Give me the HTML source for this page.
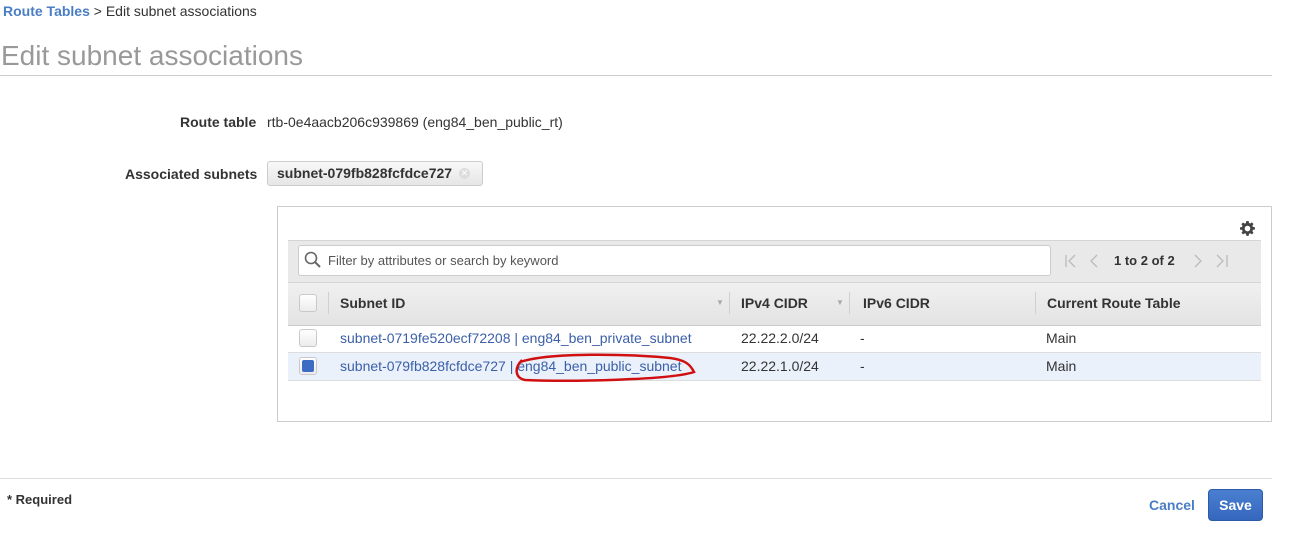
<!DOCTYPE html>
<html><head><style>
body{margin:0;width:1296px;height:544px;background:#fff;font-family:"Liberation Sans",Arial,sans-serif;position:relative;overflow:hidden;color:#333}
.a{position:absolute;white-space:nowrap}
.b{font-weight:bold}
.lnk{color:#3b5fa8}
.cb{position:absolute;width:16px;height:16px;border:1px solid #c9c9c9;border-radius:3px;background:linear-gradient(#fff,#ececec)}
.sep{position:absolute;width:1px;background:#d0d0d0}
</style></head><body>
<div class="a" style="left:3px;top:3px;font-size:14px"><span class="b" style="color:#4a7ec4">Route Tables</span> &gt; Edit subnet associations</div>
<div class="a" style="left:1px;top:40px;font-size:28px;color:#999">Edit subnet associations</div>
<div class="a" style="left:0;top:75px;width:1272px;height:1px;background:#ccc"></div>
<div class="a b" style="left:180px;top:114px;font-size:14px">Route table</div>
<div class="a" style="left:267px;top:114px;font-size:14px">rtb-0e4aacb206c939869 (eng84_ben_public_rt)</div>
<div class="a b" style="left:125px;top:166px;font-size:14px">Associated subnets</div>
<div class="a" style="left:267px;top:161px;width:214px;height:23px;border:1px solid #ccc;border-radius:3px;background:linear-gradient(#f8f8f8,#e6e6e6)"></div>
<div class="a b" style="left:277px;top:165px;font-size:14px">subnet-079fb828fcfdce727</div>
<div class="a" style="left:459px;top:168px;width:11px;height:11px;border-radius:50%;background:#ddd;color:#fff;font-size:9px;line-height:11px;text-align:center">✕</div>

<div class="a" style="left:277px;top:206px;width:993px;height:214px;border:1px solid #ccc"></div>
<svg class="a" style="left:1240px;top:221px" width="15" height="15" viewBox="0 0 16 16"><path fill="#444" d="M6.8 0h2.4l.4 2.1 1.3.6 1.8-1.2 1.7 1.7-1.2 1.8.6 1.3 2.1.4v2.4l-2.1.4-.6 1.3 1.2 1.8-1.7 1.7-1.8-1.2-1.3.6-.4 2.1H6.8l-.4-2.1-1.3-.6-1.8 1.2-1.7-1.7 1.2-1.8-.6-1.3L0 9.2V6.8l2.1-.4.6-1.3-1.2-1.8 1.7-1.7 1.8 1.2 1.3-.6zM8 5a3 3 0 100 6 3 3 0 000-6z"/></svg>
<div class="a" style="left:288px;top:240px;width:973px;height:41px;background:#e9e9e9;border-top:1px solid #d5d5d5"></div>
<div class="a" style="left:298px;top:245px;width:751px;height:29px;background:#fff;border:1px solid #ccc;border-radius:3px"></div>
<svg class="a" style="left:304px;top:251px" width="18" height="18" viewBox="0 0 18 18"><circle cx="7" cy="7" r="5.5" fill="none" stroke="#666" stroke-width="1.6"/><path d="M11 11l5 5" stroke="#666" stroke-width="2"/></svg>
<div class="a" style="left:328px;top:253px;font-size:13px;color:#555">Filter by attributes or search by keyword</div>
<svg class="a" style="left:1062px;top:252px" width="170" height="18" viewBox="0 0 170 18" fill="none" stroke="#bbb" stroke-width="1.3"><path d="M4 3v12M13 3l-6 6 6 6M35 3l-6 6 6 6M133 3l6 6-6 6M155 3l6 6-6 6M165 3v12"/></svg>
<div class="a b" style="left:1114px;top:253px;font-size:13px">1 to 2 of 2</div>

<div class="a" style="left:288px;top:282px;width:973px;height:42px;background:linear-gradient(#f0f0f0,#e3e3e3);border-top:1px solid #d5d5d5;border-bottom:1px solid #ccc"></div>
<div class="cb" style="left:299px;top:294px"></div>
<div class="sep" style="left:328px;top:292px;height:22px"></div>
<div class="sep" style="left:729px;top:292px;height:22px"></div>
<div class="sep" style="left:849px;top:292px;height:22px"></div>
<div class="sep" style="left:1035px;top:292px;height:22px"></div>
<div class="a b" style="left:340px;top:295px;font-size:14px">Subnet ID</div>
<div class="a" style="left:716px;top:298px;font-size:8px;color:#aaa">▼</div>
<div class="a b" style="left:741px;top:295px;font-size:14px">IPv4 CIDR</div>
<div class="a" style="left:836px;top:298px;font-size:8px;color:#aaa">▼</div>
<div class="a b" style="left:863px;top:295px;font-size:14px">IPv6 CIDR</div>
<div class="a b" style="left:1047px;top:295px;font-size:14px">Current Route Table</div>

<div class="a" style="left:288px;top:325px;width:973px;height:27px;border-bottom:1px solid #ddd"></div>
<div class="cb" style="left:299px;top:329px"></div>
<div class="a lnk" style="left:340px;top:330px;font-size:14px">subnet-0719fe520ecf72208 | eng84_ben_private_subnet</div>
<div class="a" style="left:741px;top:330px;font-size:14px">22.22.2.0/24</div>
<div class="a" style="left:860px;top:330px;font-size:14px">-</div>
<div class="a" style="left:1046px;top:330px;font-size:14px">Main</div>

<div class="a" style="left:288px;top:353px;width:973px;height:27px;background:#eaf1fb;border-bottom:1px solid #ddd"></div>
<div class="cb" style="left:299px;top:357px"></div>
<div class="a" style="left:302px;top:360px;width:12px;height:12px;border-radius:2px;background:#3c6cc4"></div>
<div class="a lnk" style="left:340px;top:358px;font-size:14px">subnet-079fb828fcfdce727 | eng84_ben_public_subnet</div>
<div class="a" style="left:741px;top:358px;font-size:14px">22.22.1.0/24</div>
<div class="a" style="left:860px;top:358px;font-size:14px">-</div>
<div class="a" style="left:1046px;top:358px;font-size:14px">Main</div>
<svg class="a" style="left:510px;top:350px" width="190" height="35"><path d="M10 12 C40 2,120 4,160 8 C175 10,180 14,184 22 C160 30,60 32,15 30 C5 28,4 18,12 10" fill="none" stroke="#d01010" stroke-width="2.5"/></svg>

<div class="a" style="left:0;top:478px;width:1272px;height:1px;background:#ddd"></div>
<div class="a b" style="left:7px;top:492px;font-size:13px">* Required</div>
<div class="a b" style="left:1149px;top:497px;font-size:14px;color:#4a7ec4">Cancel</div>
<div class="a b" style="left:1208px;top:489px;width:55px;height:32px;border-radius:4px;background:linear-gradient(#4a7fd0,#3567be);border:1px solid #2d5aa8;box-sizing:border-box;color:#fff;font-size:14px;text-align:center;line-height:30px">Save</div>
</body></html>
